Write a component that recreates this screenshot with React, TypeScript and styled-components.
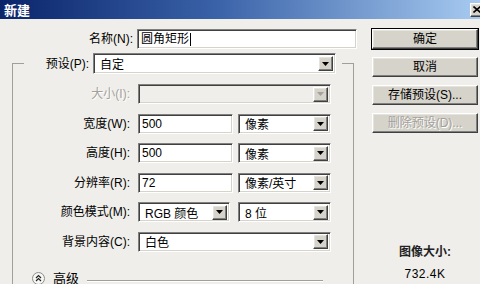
import React from 'react'
import styled, { createGlobalStyle, css } from 'styled-components'

const GlobalStyle = createGlobalStyle`
  body {
    margin: 0;
    background: #efeeea;
    font-family: 'Liberation Sans', 'Noto Sans CJK SC', sans-serif;
    font-size: 12px;
    color: #000;
  }
`

const raised = css`
  border: 1px solid;
  border-color: #ffffff #404040 #404040 #ffffff;
  box-shadow: inset -1px -1px #808080, inset 1px 1px #e6e3dc;
  background: #d6d3cb;
`

const sunken = css`
  border: 1px solid;
  border-color: #808080 #ffffff #ffffff #808080;
  box-shadow: inset 1px 1px #404040, inset -1px -1px #d6d3cb;
`

const Window = styled.div`
  width: 480px;
  height: 284px;
  overflow: hidden;
  background: #efeeea;
`

const TitleBar = styled.div`
  height: 19px;
  display: flex;
  align-items: center;
  justify-content: space-between;
  padding-left: 4px;
  overflow: hidden;
  background: linear-gradient(to right, #0a246a, #3a62a8 45%, #a6caf0);
`

const Title = styled.span`
  color: #fff;
  font-family: 'Noto Sans CJK SC', sans-serif;
  font-weight: bold;
  font-size: 13px;
  line-height: 19px;
`

const CloseButton = styled.div`
  ${raised};
  width: 14px;
  height: 14px;
  flex-shrink: 0;
  margin-right: -4px;
  display: flex;
  align-items: center;
  justify-content: center;
  box-sizing: border-box;
`

const Body = styled.div`
  display: flex;
  padding-top: 10px;
`

const LeftPane = styled.div`
  width: 360px;
`

const RightPane = styled.div`
  width: 106px;
  margin-left: 12px;
  display: flex;
  flex-direction: column;
  gap: 8px;
`

const NameRow = styled.div`
  display: flex;
  align-items: center;
`

const Label = styled.label<{ $disabled?: boolean; $width?: number }>`
  width: ${({ $width }) => ($width ? `${$width}px` : 'auto')};
  text-align: right;
  white-space: nowrap;
  line-height: 20px;
  padding-right: 4px;
  box-sizing: border-box;
  color: ${({ $disabled }) => ($disabled ? '#a3a19b' : '#000')};
  text-shadow: ${({ $disabled }) => ($disabled ? '1px 1px #ffffff' : 'none')};
`

const TextField = styled.div<{ $width: number }>`
  ${sunken};
  width: ${({ $width }) => $width}px;
  height: 20px;
  box-sizing: border-box;
  background: #fff;
  padding-left: 3px;
  line-height: 18px;
  display: flex;
  align-items: center;
  white-space: nowrap;
`

const Caret = styled.span`
  display: inline-block;
  width: 1px;
  height: 13px;
  background: #000;
  margin-left: 1px;
`

const SelectBox = styled.div<{ $width: number; $height?: number; $disabled?: boolean }>`
  ${sunken};
  width: ${({ $width }) => $width}px;
  height: ${({ $height }) => $height ?? 20}px;
  box-sizing: border-box;
  background: ${({ $disabled }) => ($disabled ? '#efeeea' : '#fff')};
  display: flex;
  align-items: center;
  justify-content: space-between;
  padding: 2px 2px 2px 6px;
`

const SelectText = styled.span`
  white-space: nowrap;
`

const DropButton = styled.div`
  ${raised};
  width: 15px;
  height: 15px;
  box-sizing: border-box;
  display: flex;
  align-items: center;
  justify-content: center;
  flex-shrink: 0;
`

const Group = styled.fieldset`
  margin: 4px 0 0 12px;
  padding: 0;
  width: 342px;
  height: 240px;
  box-sizing: border-box;
  border: 1px solid #a09f9a;
  border-bottom: none;
`

const Legend = styled.legend`
  margin-left: 11px;
  padding: 0 6px 0 2px;
  display: flex;
  align-items: center;
`

const Rows = styled.div`
  display: grid;
  grid-template-columns: 121px auto;
  row-gap: 9.5px;
  column-gap: 4px;
  align-items: center;
  justify-items: start;
  padding-top: 10px;
`

const Pair = styled.div<{ $gap: number }>`
  display: flex;
  gap: ${({ $gap }) => $gap}px;
`

const AdvancedRow = styled.div`
  display: flex;
  align-items: center;
  gap: 8px;
  margin-top: 20px;
  padding-left: 19px;
  padding-right: 30px;
`

const AdvancedText = styled.span`
  font-size: 13px;
  line-height: 14px;
`

const Divider = styled.div`
  flex: 1;
  height: 0;
  border-top: 1px solid #a09f9a;
  border-bottom: 1px solid #ffffff;
  margin-top: 4px;
`

const Button = styled.button<{ $default?: boolean; $disabled?: boolean }>`
  ${raised};
  width: 106px;
  height: 20px;
  padding: 0;
  font: inherit;
  font-size: 12px;
  line-height: 16px;
  color: ${({ $disabled }) => ($disabled ? '#a3a19b' : '#000')};
  text-shadow: ${({ $disabled }) => ($disabled ? '1px 1px #ffffff' : 'none')};
  ${({ $default }) =>
    $default &&
    css`
      outline: 1px solid #000;
      outline-offset: 0;
    `}
`

const Info = styled.div`
  margin-top: 100px;
  text-align: center;
  line-height: 22px;
`

const InfoTitle = styled.div`
  font-weight: bold;
  color: #222;
`

const InfoValue = styled.div`
  letter-spacing: 0.5px;
`

const Arrow = ({ disabled }: { disabled?: boolean }) => (
  <svg width="7" height="4" viewBox="0 0 7 4">
    <path d="M0 0 H7 L3.5 4 Z" fill={disabled ? '#a3a19b' : '#000'} />
  </svg>
)

interface SelectProps {
  value?: string
  width: number
  height?: number
  disabled?: boolean
}

const Select = ({ value, width, height, disabled }: SelectProps) => (
  <SelectBox $width={width} $height={height} $disabled={disabled}>
    <SelectText>{value}</SelectText>
    <DropButton>
      <Arrow disabled={disabled} />
    </DropButton>
  </SelectBox>
)

const Chevrons = () => (
  <svg width="13" height="13" viewBox="0 0 13 13">
    <circle cx="6.5" cy="6.5" r="6" fill="#f6f6f4" stroke="#8d8c88" />
    <path d="M4 6 L6.5 3.6 L9 6 M4 9 L6.5 6.6 L9 9" fill="none" stroke="#222" strokeWidth="1.2" />
  </svg>
)

export default function App() {
  return (
    <Window>
      <GlobalStyle />
      <TitleBar>
        <Title>新建</Title>
        <CloseButton>
          <svg width="8" height="7" viewBox="0 0 8 7">
            <path d="M0.5 0.5 L7.5 6.5 M7.5 0.5 L0.5 6.5" stroke="#000" strokeWidth="1.6" />
          </svg>
        </CloseButton>
      </TitleBar>
      <Body>
        <LeftPane>
          <NameRow>
            <Label $width={137}>名称(N):</Label>
            <TextField $width={220}>
              圆角矩形
              <Caret />
            </TextField>
          </NameRow>
          <Group>
            <Legend>
              <Label $width={67}>预设(P):</Label>
              <Select value="自定" width={243} height={21} />
            </Legend>
            <Rows>
              <Label $width={121} $disabled>
                大小(I):
              </Label>
              <Select width={193} disabled />

              <Label $width={121}>宽度(W):</Label>
              <Pair $gap={5}>
                <TextField $width={95}>500</TextField>
                <Select value="像素" width={93} />
              </Pair>

              <Label $width={121}>高度(H):</Label>
              <Pair $gap={5}>
                <TextField $width={95}>500</TextField>
                <Select value="像素" width={93} />
              </Pair>

              <Label $width={121}>分辨率(R):</Label>
              <Pair $gap={5}>
                <TextField $width={95}>72</TextField>
                <Select value="像素/英寸" width={93} />
              </Pair>

              <Label $width={121}>颜色模式(M):</Label>
              <Pair $gap={8}>
                <Select value="RGB 颜色" width={92} />
                <Select value="8 位" width={93} />
              </Pair>

              <Label $width={121}>背景内容(C):</Label>
              <Select value="白色" width={193} />
            </Rows>
            <AdvancedRow>
              <Chevrons />
              <AdvancedText>高级</AdvancedText>
              <Divider />
            </AdvancedRow>
          </Group>
        </LeftPane>
        <RightPane>
          <Button $default>确定</Button>
          <Button>取消</Button>
          <Button>存储预设(S)...</Button>
          <Button $disabled>删除预设(D)...</Button>
          <Info>
            <InfoTitle>图像大小:</InfoTitle>
            <InfoValue>732.4K</InfoValue>
          </Info>
        </RightPane>
      </Body>
    </Window>
  )
}
